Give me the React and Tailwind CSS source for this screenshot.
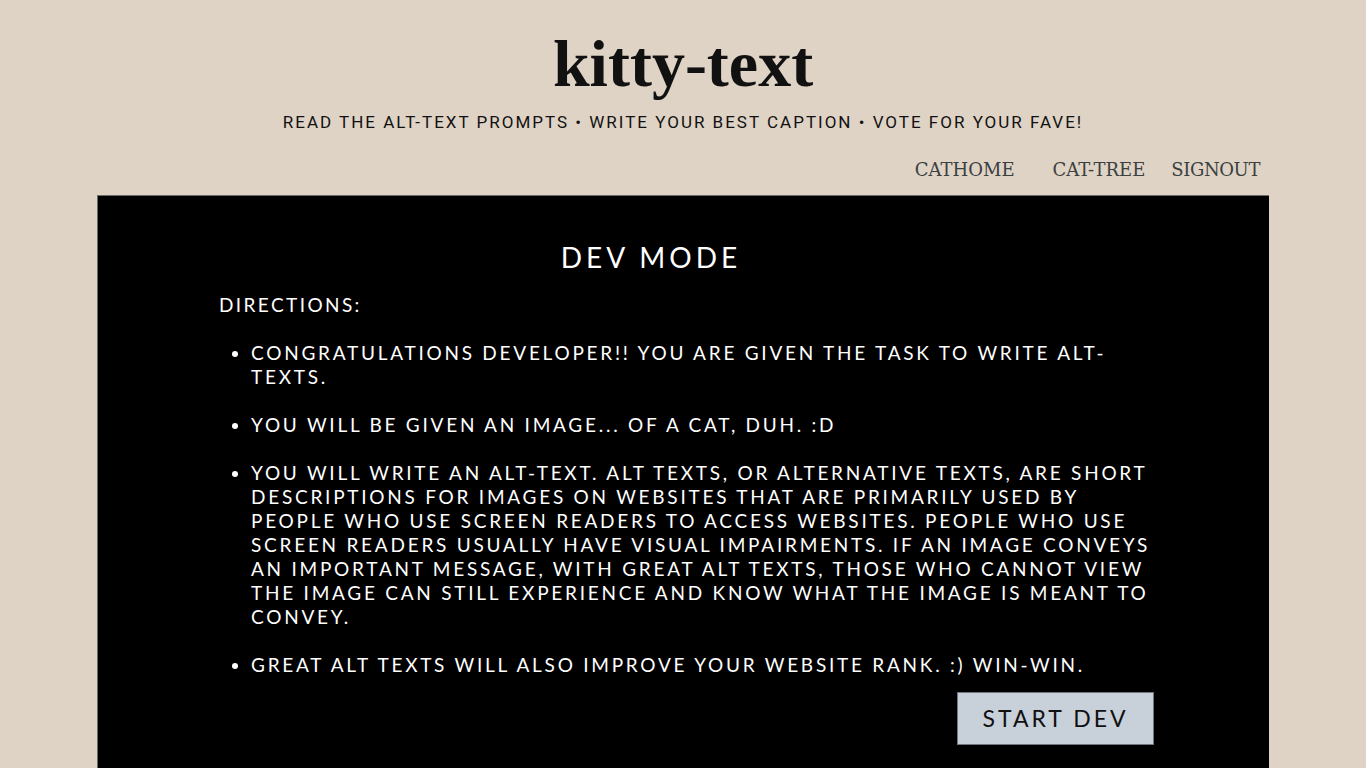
export default function App() {
  const items = [
    "CONGRATULATIONS DEVELOPER!! YOU ARE GIVEN THE TASK TO WRITE ALT-TEXTS.",
    "YOU WILL BE GIVEN AN IMAGE... OF A CAT, DUH. :D",
    "YOU WILL WRITE AN ALT-TEXT. ALT TEXTS, OR ALTERNATIVE TEXTS, ARE SHORT DESCRIPTIONS FOR IMAGES ON WEBSITES THAT ARE PRIMARILY USED BY PEOPLE WHO USE SCREEN READERS TO ACCESS WEBSITES. PEOPLE WHO USE SCREEN READERS USUALLY HAVE VISUAL IMPAIRMENTS. IF AN IMAGE CONVEYS AN IMPORTANT MESSAGE, WITH GREAT ALT TEXTS, THOSE WHO CANNOT VIEW THE IMAGE CAN STILL EXPERIENCE AND KNOW WHAT THE IMAGE IS MEANT TO CONVEY.",
    "GREAT ALT TEXTS WILL ALSO IMPROVE YOUR WEBSITE RANK. :) WIN-WIN.",
  ];
  return (
    <div className="min-h-[768px] h-[768px] overflow-hidden bg-[#dfd3c5] flex flex-col">
      <header className="flex flex-col items-center pt-[28px]">
        <h1 className="text-[66px] leading-[72px] font-bold text-[#111]" style={{ fontFamily: '"Liberation Serif", serif' }}>
          kitty-text
        </h1>
        <p className="mt-[10px] text-[17px] leading-[24px] tracking-[2px] text-[#111]" style={{ fontFamily: 'Roboto, sans-serif' }}>
          READ THE ALT-TEXT PROMPTS • WRITE YOUR BEST CAPTION • VOTE FOR YOUR FAVE!
        </p>
      </header>
      <nav className="flex justify-end pr-[106px] mt-[22px] h-[26px] items-center text-[18px] text-[#3b4040]" style={{ fontFamily: '"DejaVu Serif", serif' }}>
        <span className="mr-[38px]">CATHOME</span>
        <span className="mr-[26px]">CAT-TREE</span>
        <span className="tracking-[-0.4px]">SIGNOUT</span>
      </nav>
      <main className="mt-[13px] mx-[97px] flex-1 bg-black border-l border-t border-[#6b6b6b] text-white" style={{ fontFamily: 'Lato, sans-serif' }}>
        <div className="pl-[121px] pr-[115px]">
          <h2 className="mt-[42px] w-[864px] text-center text-[28px] leading-[38px] tracking-[4px]">DEV MODE</h2>
          <p className="mt-[17px] text-[19px] leading-[24px] tracking-[2.4px]">DIRECTIONS:</p>
          <ul className="mt-[24px] list-disc pl-[32px] text-[19px] leading-[24px] tracking-[2.75px] flex flex-col gap-[24px]">
            {items.map((t, i) => (
              <li key={i}>{t}</li>
            ))}
          </ul>
          <div className="flex justify-end mt-[15px] pr-[0px]">
            <button className="w-[197px] h-[53px] bg-[#c8d0da] border border-[#6f7680] text-[#111] text-[23px] tracking-[3px]" style={{ fontFamily: 'Lato, sans-serif' }}>
              START DEV
            </button>
          </div>
        </div>
      </main>
    </div>
  );
}
